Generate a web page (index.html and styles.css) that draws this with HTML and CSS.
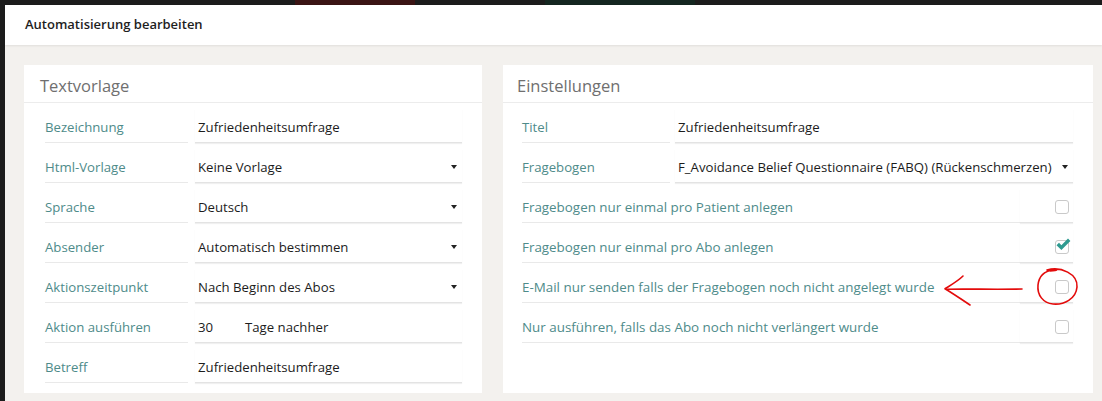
FILE: index.html
```html
<!DOCTYPE html>
<html lang="de">
<head>
<meta charset="utf-8">
<title>Automatisierung bearbeiten</title>
<link rel="stylesheet" href="styles.css">
</head>
<body>
<div class="backdrop">
  <span class="bd bd-a"></span>
  <span class="bd bd-b"></span>
  <span class="bd bd-c"></span>
</div>
<div class="dialog">
  <header class="dlg-head">Automatisierung bearbeiten</header>
  <main class="dlg-body">
    <section class="panel">
      <h2 class="panel-title">Textvorlage</h2>
      <div class="panel-body">
        <div class="row row-left"><span class="lbl">Bezeichnung</span><span class="val">Zufriedenheitsumfrage</span></div>
        <div class="row row-left"><span class="lbl">Html-Vorlage</span><span class="val select">Keine Vorlage<i class="caret"></i></span></div>
        <div class="row row-left"><span class="lbl">Sprache</span><span class="val select">Deutsch<i class="caret"></i></span></div>
        <div class="row row-left"><span class="lbl">Absender</span><span class="val select">Automatisch bestimmen<i class="caret"></i></span></div>
        <div class="row row-left"><span class="lbl">Aktionszeitpunkt</span><span class="val select">Nach Beginn des Abos<i class="caret"></i></span></div>
        <div class="row row-left"><span class="lbl">Aktion ausführen</span><span class="val"><span class="num">30</span>Tage nachher</span></div>
        <div class="row row-left"><span class="lbl">Betreff</span><span class="val">Zufriedenheitsumfrage</span></div>
      </div>
    </section>
    <section class="panel">
      <h2 class="panel-title">Einstellungen</h2>
      <div class="panel-body">
        <div class="row row-right"><span class="lbl">Titel</span><span class="val">Zufriedenheitsumfrage</span></div>
        <div class="row row-right"><span class="lbl">Fragebogen</span><span class="val select">F_Avoidance Belief Questionnaire (FABQ) (Rückenschmerzen)<i class="caret"></i></span></div>
        <div class="row row-check"><span class="lbl">Fragebogen nur einmal pro Patient anlegen</span><span class="ctl"><span class="box"></span></span></div>
        <div class="row row-check"><span class="lbl">Fragebogen nur einmal pro Abo anlegen</span><span class="ctl"><span class="box checked"><svg class="tick" viewBox="0 0 16 16" width="16" height="16"><path d="M1.5 8.2 L4 5.8 L6.4 8.3 L13 1.6 L15.4 4 L6.4 13 Z" fill="#2e9a90"/></svg></span></span></div>
        <div class="row row-check"><span class="lbl">E-Mail nur senden falls der Fragebogen noch nicht angelegt wurde</span><span class="ctl"><span class="box"></span></span></div>
        <div class="row row-check"><span class="lbl">Nur ausführen, falls das Abo noch nicht verlängert wurde</span><span class="ctl"><span class="box"></span></span></div>
      </div>
    </section>
  </main>
  <svg class="annot" viewBox="0 0 158 48" width="158" height="48">
    <path d="M21 27.2 C44 26.8 70 27.6 96 27" fill="none" stroke="#e30b0b" stroke-width="1.6" stroke-linecap="round"/>
    <path d="M37 14 C32 19 25 23 19 26.8 C26 31 35 37 44 43" fill="none" stroke="#e30b0b" stroke-width="1.6" stroke-linecap="round" stroke-linejoin="round"/>
    <path d="M121 8 C135 4 152 12 151 25 C150 37 138 43 127 42 C117 41 111 33 112 23 C113 14 119 9 127 8 C131 7.5 133 8.5 124 9" fill="none" stroke="#e30b0b" stroke-width="1.6" stroke-linecap="round"/>
  </svg>
</div>
</body>
</html>
```
FILE: styles.css
```css
* { box-sizing: border-box; }
html, body { margin: 0; padding: 0; }
body {
  width: 1102px;
  height: 401px;
  overflow: hidden;
  background: #1c1c1c;
  font-family: "Open Sans", "Noto Sans", "Liberation Sans", sans-serif;
  position: relative;
}
.backdrop {
  height: 5px;
  display: flex;
}
.bd { display: block; height: 5px; }
.bd-a { width: 295px; }
.bd-b { width: 120px; background: #3a1414; }
.bd-c { width: 150px; margin-left: 130px; background: #142620; }
.dialog {
  margin-left: 5px;
  height: 396px;
  display: flex;
  flex-direction: column;
  background: #f3f1ee;
  position: relative;
}
.dlg-head {
  height: 40px;
  flex: none;
  background: #fff;
  padding: 10px 20px 0;
  font-size: 13px;
  font-weight: 600;
  color: #1e1e1e;
  line-height: 18px;
  box-shadow: 0 1px 2px rgba(0,0,0,0.08);
  position: relative;
  z-index: 1;
}
.dlg-body {
  flex: 1;
  display: grid;
  grid-template-columns: 458px 590px;
  column-gap: 21px;
  padding: 20px 0 8px 19px;
}
.panel {
  background: #fff;
  display: flex;
  flex-direction: column;
}
.panel-title {
  margin: 0;
  height: 38px;
  padding: 10px 16px 0;
  font-size: 16.5px;
  line-height: 22px;
  font-weight: 400;
  color: #6f6f6f;
  border-bottom: 1px solid #ececec;
}
.panel:nth-child(2) .panel-title { padding-left: 14px; }
.panel-body {
  padding: 6px 20px 0 21px;
}
.panel:nth-child(2) .panel-body { padding-left: 19px; }
.row {
  display: grid;
  margin-bottom: 6px;
  font-size: 13.2px;
  line-height: 20px;
}
.row-left { grid-template-columns: 143px 1fr; column-gap: 7px; }
.row-right { grid-template-columns: 148px 1fr; column-gap: 5px; }
.row-check { grid-template-columns: 1fr 53px; }
.lbl {
  color: #4e8b8a;
  padding: 8px 0 5px;
  border-bottom: 1px solid #e9e9e9;
  white-space: nowrap;
}
.row-check .lbl { font-size: 13.4px; }
.val, .ctl {
  color: #1c1c1c;
  padding: 8px 4px 5px 3px;
  border-bottom: 1px solid #e3e3e3;
  box-shadow: 0 1px 1px rgba(0,0,0,0.06);
  white-space: nowrap;
  display: flex;
  align-items: center;
}
.select { justify-content: space-between; }
.caret {
  width: 0;
  height: 0;
  border-left: 3.5px solid transparent;
  border-right: 3.5px solid transparent;
  border-top: 4px solid #222;
  margin-right: 1px;
}
.num { width: 47px; }
.ctl { justify-content: flex-end; padding-right: 4px; }
.box {
  width: 14px;
  height: 14px;
  border: 1px solid #c9c9c9;
  border-radius: 3px;
  background: #fff;
  position: relative;
}
.tick {
  position: absolute;
  left: -1px;
  top: -4px;
}
.annot {
  position: absolute;
  left: 921px;
  top: 257px;
}
```
